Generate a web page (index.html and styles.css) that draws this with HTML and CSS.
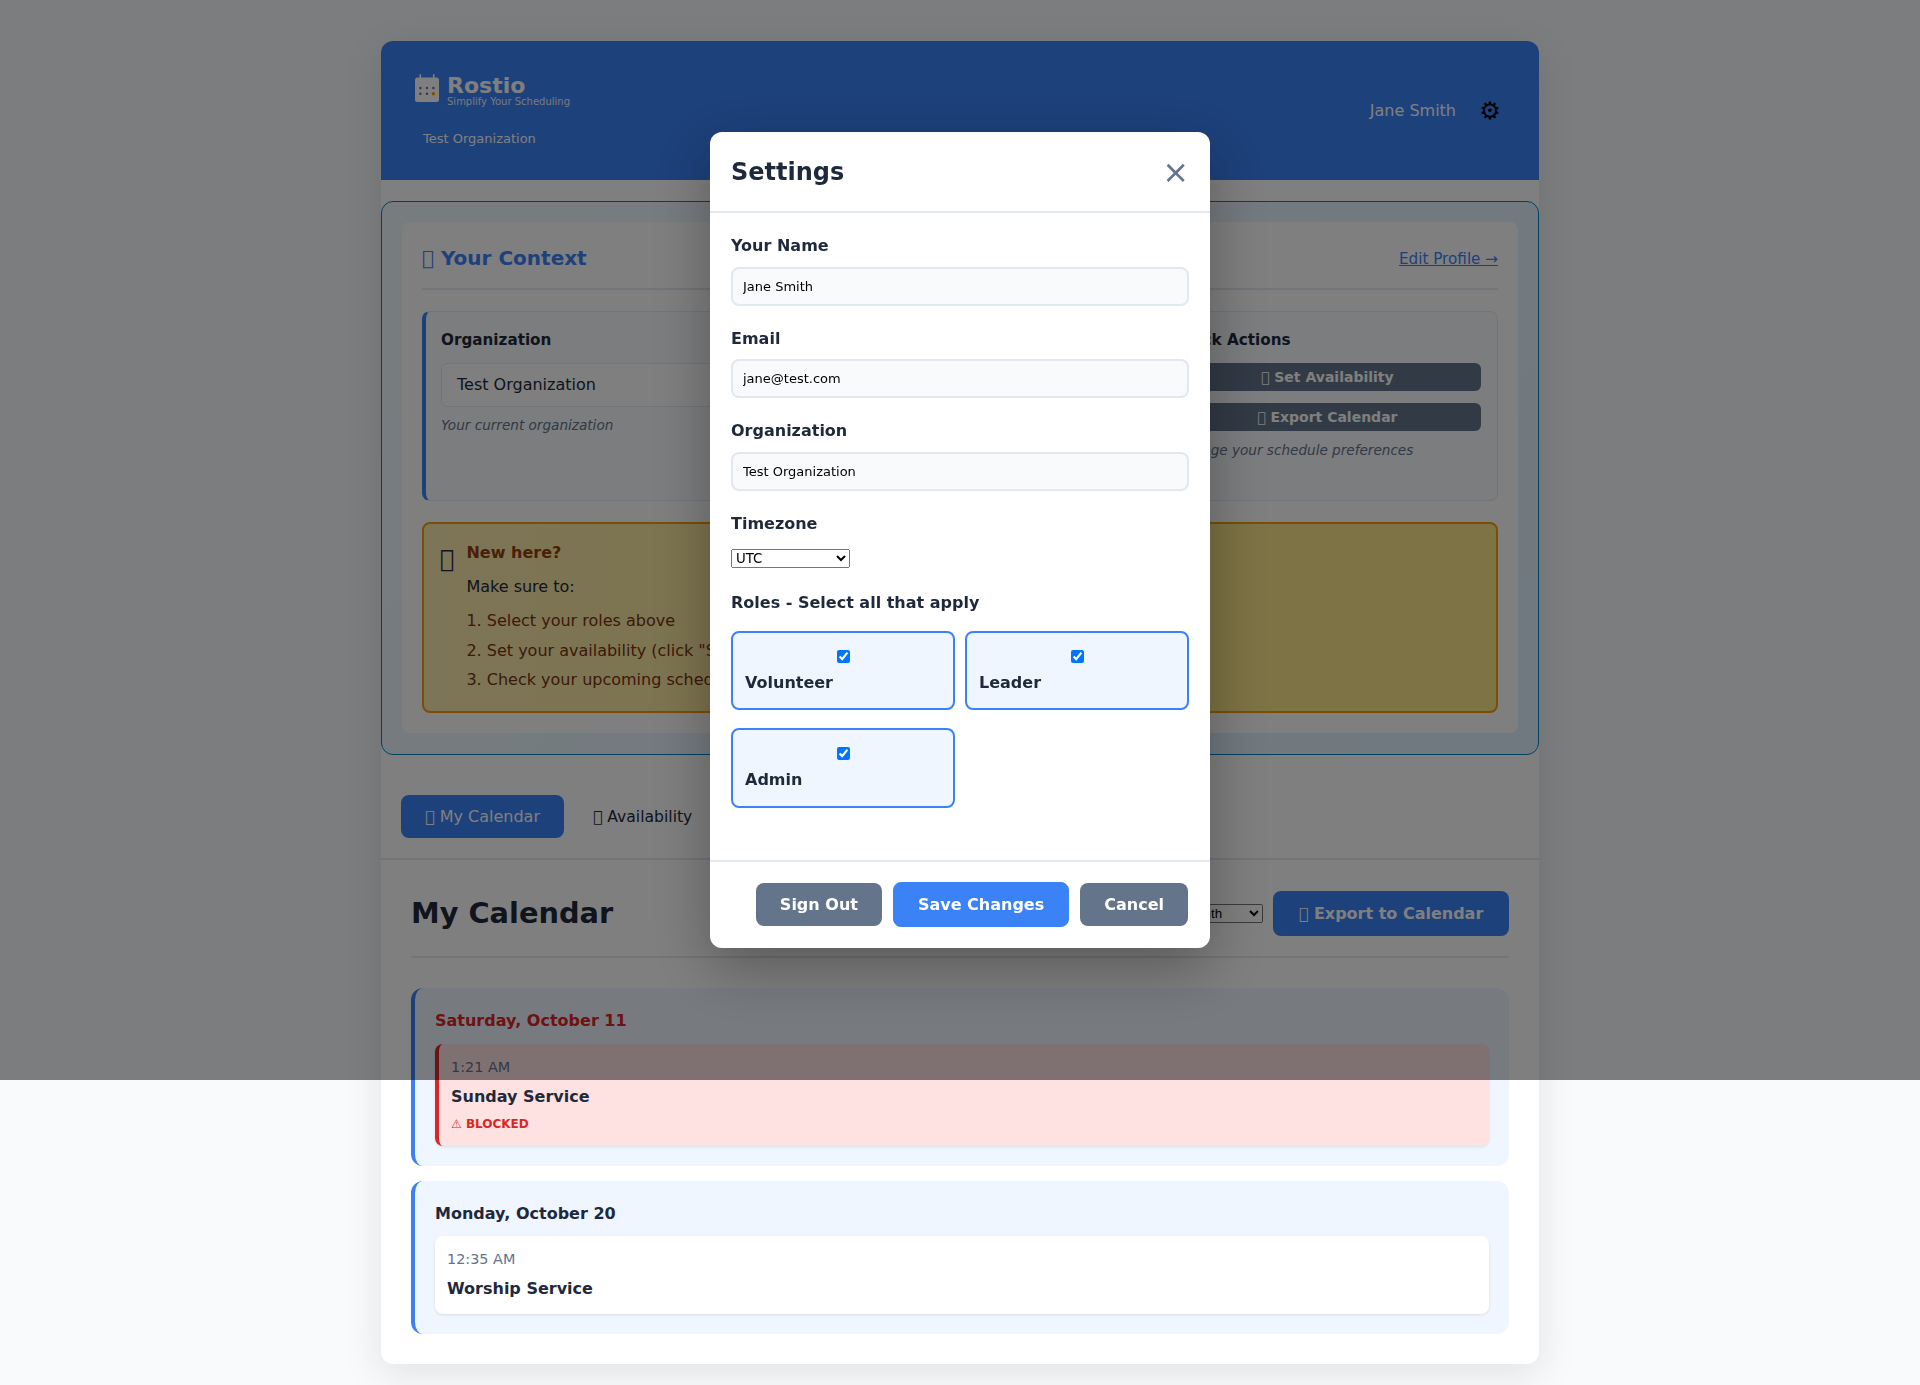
FILE: index.html
```html
<!DOCTYPE html>
<html lang="en">
<head>
    <meta charset="UTF-8">
    <meta name="viewport" content="width=device-width, initial-scale=1.0">
    <title>Rostio</title>
    <link rel="stylesheet" href="styles.css">
</head>
<body>
    <div class="app-container">
        <header class="app-header">
            <div class="brand-block">
                <div class="brand">
                    <svg class="brand-icon" viewBox="0 0 32 32" aria-hidden="true">
                        <rect x="8.5" y="2" width="1.6" height="5" rx="0.8" fill="#fff"/>
                        <rect x="21.9" y="2" width="1.6" height="5" rx="0.8" fill="#fff"/>
                        <rect x="4" y="5.5" width="24" height="24.5" rx="2.5" fill="#fff"/>
                        <g fill="#64748b">
                            <circle cx="9.4" cy="16" r="1.2"/>
                            <circle cx="16" cy="16" r="1.2"/>
                            <circle cx="22.4" cy="16" r="1.2"/>
                            <circle cx="9.4" cy="21.8" r="1.2"/>
                            <circle cx="16" cy="21.8" r="1.2"/>
                        </g>
                        <circle cx="22.4" cy="21.8" r="1.7" fill="#f59e0b"/>
                    </svg>
                    <div class="brand-text">
                        <div class="brand-name">Rostio</div>
                        <div class="brand-tagline">Simplify Your Scheduling</div>
                    </div>
                </div>
                <div class="org-name">Test Organization</div>
            </div>
            <div class="user-block">
                <span class="user-name">Jane Smith</span>
                <button class="gear-btn" type="button">⚙</button>
            </div>
        </header>

        <section class="context-box">
            <div class="context-card">
                <div class="context-head">
                    <h3>&#x10FFFD; Your Context</h3>
                    <a href="#" class="edit-link">Edit Profile →</a>
                </div>
                <div class="context-grid">
                    <div class="context-item context-item-org">
                        <div class="item-label">Organization</div>
                        <div class="org-box">Test Organization</div>
                        <p class="help-text">Your current organization</p>
                    </div>
                    <div class="context-item">
                        <div class="item-label">Your Roles</div>
                        <p class="help-text">Volunteer, Leader, Admin</p>
                    </div>
                    <div class="context-item">
                        <div class="item-label">Quick Actions</div>
                        <button class="action-btn" type="button">&#x10FFFD; Set Availability</button>
                        <button class="action-btn" type="button">&#x10FFFD; Export Calendar</button>
                        <p class="help-text">Manage your schedule preferences</p>
                    </div>
                </div>
                <div class="callout">
                    <div class="callout-icon">&#x10FFFD;</div>
                    <div>
                        <div class="callout-title">New here?</div>
                        <p class="callout-text">Make sure to:</p>
                        <ol class="callout-list">
                            <li>Select your roles above</li>
                            <li>Set your availability (click "Set Availability" above)</li>
                            <li>Check your upcoming schedule below</li>
                        </ol>
                    </div>
                </div>
            </div>
        </section>

        <nav class="tabs">
            <button class="tab tab-active" type="button">&#x10FFFD; My Calendar</button>
            <button class="tab" type="button">&#x10FFFD; Availability</button>
        </nav>

        <main class="calendar-section">
            <div class="calendar-head">
                <h2>My Calendar</h2>
                <div class="calendar-tools">
                    <select class="view-select">
                        <option>Month</option>
                    </select>
                    <button class="export-btn" type="button">&#x10FFFD; Export to Calendar</button>
                </div>
            </div>

            <div class="day-card">
                <div class="day-title day-title-blocked">Saturday, October 11</div>
                <div class="event event-blocked">
                    <div class="event-time">1:21 AM</div>
                    <div class="event-name">Sunday Service</div>
                    <div class="event-flag"><span class="flag-icon">⚠</span> BLOCKED</div>
                </div>
            </div>

            <div class="day-card">
                <div class="day-title">Monday, October 20</div>
                <div class="event">
                    <div class="event-time">12:35 AM</div>
                    <div class="event-name">Worship Service</div>
                </div>
            </div>
        </main>
    </div>

    <div class="modal-overlay">
        <div class="modal">
            <div class="modal-header">
                <h2>Settings</h2>
                <button class="modal-close" type="button">×</button>
            </div>
            <div class="modal-body">
                <div class="form-group">
                    <label for="name">Your Name</label>
                    <input type="text" id="name" value="Jane Smith">
                </div>
                <div class="form-group">
                    <label for="email">Email</label>
                    <input type="email" id="email" value="jane@test.com">
                </div>
                <div class="form-group">
                    <label for="org">Organization</label>
                    <input type="text" id="org" value="Test Organization">
                </div>
                <div class="form-group">
                    <label for="tz">Timezone</label>
                    <select id="tz" class="tz-select">
                        <option>UTC</option>
                    </select>
                </div>
                <div class="form-group">
                    <label>Roles - Select all that apply</label>
                    <div class="role-grid">
                        <label class="role-card"><input type="checkbox" checked><span>Volunteer</span></label>
                        <label class="role-card"><input type="checkbox" checked><span>Leader</span></label>
                        <label class="role-card"><input type="checkbox" checked><span>Admin</span></label>
                    </div>
                </div>
            </div>
            <div class="modal-footer">
                <button class="btn btn-secondary" type="button">Sign Out</button>
                <button class="btn btn-primary" type="button">Save Changes</button>
                <button class="btn btn-secondary" type="button">Cancel</button>
            </div>
        </div>
    </div>
</body>
</html>
```

FILE: styles.css
```css
* {
    box-sizing: border-box;
}
body {
    font-family: "DejaVu Sans", sans-serif;
    background-color: #f8fafc;
    color: #1e293b;
    line-height: 1.6;
    margin: 0;
    padding: 41px 0 21px;
}
button {
    font-family: inherit;
}
.app-container {
    width: 1158px;
    margin: 0 auto;
    background-color: #fff;
    border-radius: 12px;
    box-shadow: 0 10px 40px rgba(0, 0, 0, 0.1);
}

/* header */
.app-header {
    background-color: #3b82f6;
    color: #fff;
    height: 139px;
    padding: 30px 37px 30px 30px;
    border-radius: 12px 12px 0 0;
    display: flex;
    justify-content: space-between;
    align-items: center;
}
.brand {
    display: flex;
    align-items: flex-start;
    gap: 4px;
}
.brand-icon {
    width: 32px;
    height: 32px;
    flex-shrink: 0;
}
.brand-text {
    padding-top: 3px;
}
.brand-name {
    font-size: 22px;
    font-weight: bold;
    line-height: 22px;
}
.brand-tagline {
    font-size: 10px;
    line-height: 10px;
    opacity: 0.9;
}
.org-name {
    font-size: 13px;
    padding-left: 12px;
    margin-top: 22px;
}
.user-block {
    display: flex;
    align-items: center;
    gap: 22px;
}
.gear-btn {
    background: none;
    border: none;
    padding: 0;
    color: #000;
    font-size: 24px;
    line-height: 1;
    width: 24px;
}

/* context */
.context-box {
    margin-top: 21px;
    padding: 20px 20px 21px;
    background: linear-gradient(135deg, #f0f9ff, #e0f2fe);
    border: 1px solid #0284c7;
    border-radius: 12px;
}
.context-card {
    background-color: #fff;
    border-radius: 8px;
    padding: 20px;
}
.context-head {
    display: flex;
    justify-content: space-between;
    align-items: center;
    height: 48.3px;
    padding-bottom: 14px;
    border-bottom: 2px solid #e2e8f0;
    margin-bottom: 21px;
}
.context-head h3 {
    margin: 0;
    font-size: 20px;
    color: #3b82f6;
}
.edit-link {
    color: #3b82f6;
    font-size: 15.2px;
    padding-top: 2px;
}
.context-grid {
    display: grid;
    grid-template-columns: repeat(3, 1fr);
    gap: 26px;
    min-height: 190px;
    margin-bottom: 21px;
}
.context-item {
    border: 1px solid #e2e8f0;
    border-radius: 8px;
    padding: 16px;
    background-color: #f8fafc;
}
.context-item-org {
    border-left: 4px solid #3b82f6;
    padding-left: 15px;
}
.item-label {
    font-size: 15.2px;
    font-weight: bold;
    margin-bottom: 10px;
}
.org-box {
    height: 44px;
    padding: 8px 15px;
    border: 1px solid #e2e8f0;
    border-radius: 6px;
    background-color: #fff;
}
.help-text {
    margin: 8px 0 0;
    font-size: 13.6px;
    font-style: italic;
    color: #64748b;
}
.action-btn {
    display: block;
    width: 100%;
    height: 28px;
    padding: 0;
    margin-bottom: 12px;
    background-color: #64748b;
    color: #fff;
    border: none;
    border-radius: 6px;
    font-size: 14px;
    font-weight: bold;
}
.action-btn + .help-text {
    margin-top: -3px;
}
.callout {
    display: flex;
    gap: 12px;
    padding: 16px;
    height: 191px;
    background: linear-gradient(90deg, #fbeab0, #fde68a 60%);
    border: 2px solid #f59e0b;
    border-radius: 8px;
}
.callout-icon {
    font-size: 24px;
    line-height: 38px;
}
.callout-title {
    font-weight: bold;
    color: #92400e;
}
.callout-text {
    margin: 8px 0 9px;
}
.callout-list {
    margin: 0;
    padding: 0;
    list-style-position: inside;
    color: #78350f;
}
.callout-list li {
    margin-bottom: 3.6px;
}

/* tabs */
.tabs {
    display: flex;
    gap: 5px;
    padding: 40px 20px 20px;
    border-bottom: 2px solid #e2e8f0;
}
.tab {
    background: none;
    border: none;
    padding: 12px 24px;
    height: 43px;
    font-size: 15.6px;
    color: #1e293b;
    border-radius: 8px;
}
.tab-active {
    background-color: #3b82f6;
    color: #fff;
    font-size: 16px;
}

/* calendar */
.calendar-section {
    padding: 30px;
}
.calendar-head {
    display: flex;
    justify-content: space-between;
    align-items: center;
    padding-bottom: 20px;
    border-bottom: 2px solid #e2e8f0;
    margin-bottom: 30px;
}
.calendar-head h2 {
    margin: 0;
    font-size: 28.8px;
}
.calendar-tools {
    display: flex;
    align-items: center;
    gap: 10px;
}
.view-select {
    width: 83px;
}
.export-btn {
    height: 45px;
    width: 236px;
    border: none;
    border-radius: 8px;
    background-color: #3b82f6;
    color: #fff;
    font-size: 16px;
    font-weight: bold;
}
.day-card {
    background-color: #eff6ff;
    border-left: 4px solid #3b82f6;
    border-radius: 12px;
    padding: 20px;
    margin-bottom: 15px;
}
.day-card:last-child {
    margin-bottom: 0;
}
.day-title {
    font-weight: bold;
    margin-bottom: 10px;
}
.day-title-blocked {
    color: #dc2626;
}
.event {
    background-color: #fff;
    border-radius: 8px;
    padding: 12px;
    box-shadow: 0 1px 3px rgba(0, 0, 0, 0.1);
}
.event-blocked {
    background-color: #fee2e2;
    border-left: 4px solid #dc2626;
}
.event-time {
    font-size: 14.4px;
    color: #64748b;
}
.event-name {
    font-weight: bold;
    margin-top: 5px;
}
.event-flag {
    font-size: 12px;
    font-weight: bold;
    color: #dc2626;
    margin-top: 5px;
}
.flag-icon {
    font-weight: normal;
}

/* settings modal */
.modal-overlay {
    position: fixed;
    top: 0;
    left: 0;
    width: 100%;
    height: 1080px;
    background-color: rgba(0, 0, 0, 0.5);
    display: flex;
    justify-content: center;
    align-items: center;
}
.modal {
    width: 500px;
    height: 816px;
    background-color: #fff;
    border-radius: 12px;
    overflow: hidden;
    box-shadow: 0 20px 60px rgba(0, 0, 0, 0.3);
    display: flex;
    flex-direction: column;
}
.modal-header {
    display: flex;
    justify-content: space-between;
    align-items: center;
    padding: 21px 21px 20px;
    border-bottom: 2px solid #e2e8f0;
}
.modal-header h2 {
    margin: 0;
    font-size: 24px;
    line-height: 38px;
}
.modal-close {
    background: none;
    border: none;
    padding: 0;
    color: #64748b;
    font-size: 32px;
    line-height: 38px;
}
.modal-body {
    flex: 1;
    padding: 20px 21px 0;
}
.form-group {
    margin-bottom: 20px;
}
.form-group > label {
    display: block;
    font-weight: bold;
    margin-bottom: 8px;
}
.form-group > input {
    display: block;
    width: 100%;
    padding: 10px;
    border: 2px solid #e2e8f0;
    border-radius: 8px;
    background-color: #f8fafc;
    font-family: inherit;
    font-size: 13px;
    color: #000;
}
.tz-select {
    width: 119px;
    margin-top: 5px;
    font-family: inherit;
    vertical-align: top;
}
.role-grid {
    display: grid;
    grid-template-columns: 1fr 1fr;
    gap: 10px;
    margin-top: 15px;
}
.role-card {
    display: flex;
    flex-direction: column;
    align-items: center;
    padding: 12px 12px 13px;
    margin-bottom: 8px;
    background-color: #eff6ff;
    border: 2px solid #3b82f6;
    border-radius: 8px;
    font-weight: bold;
}
.role-card input {
    margin: 5px 0 7px;
}
.role-card span {
    align-self: stretch;
}
.modal-footer {
    display: flex;
    justify-content: flex-end;
    align-items: center;
    gap: 11px;
    padding: 20px 22px 21px 20px;
    border-top: 2px solid #e2e8f0;
}
.btn {
    padding: 12px 24px;
    border: none;
    border-radius: 8px;
    font-size: 16px;
    font-weight: bold;
    color: #fff;
}
.btn-secondary {
    background-color: #64748b;
}
.btn-primary {
    background-color: #3b82f6;
    border: 1px solid #3b82f6;
}
```
